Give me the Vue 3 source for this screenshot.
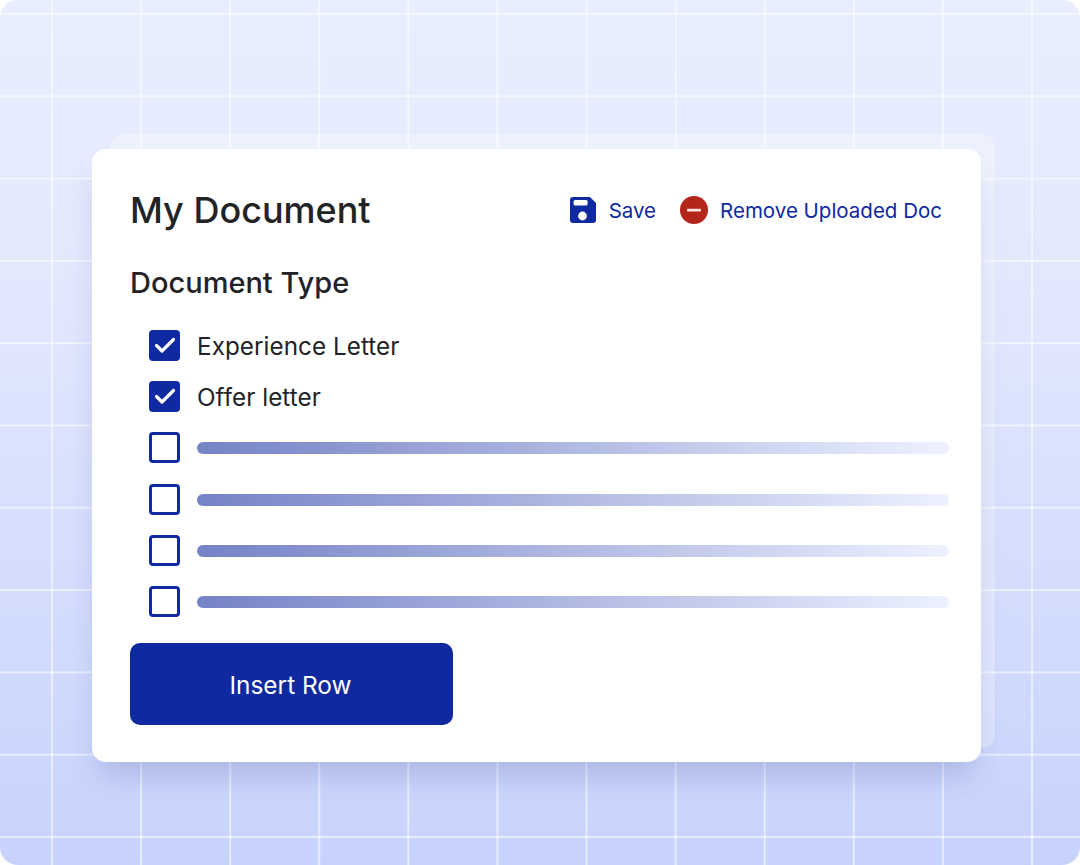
<script setup>
const checked = ['Experience Letter', 'Offer letter']
const empty = [1, 2, 3, 4]
</script>

<template>
  <div class="stage">
    <div class="back-card"></div>
    <section class="card">
      <header class="head">
        <h1 class="title">My Document</h1>
        <div class="actions">
          <a class="action save">
            <svg class="save-icon" viewBox="0 0 26 26" aria-hidden="true">
              <path fill="#0F29A0" fill-rule="evenodd" d="M3 0H20L26 6V23a3 3 0 0 1-3 3H3a3 3 0 0 1-3-3V3a3 3 0 0 1 3-3ZM5.200 3a1.600 1.600 0 0 0-1.600 1.600V7a1.600 1.600 0 0 0 1.600 1.600H16a1.600 1.600 0 0 0 1.600-1.600V4.600A1.600 1.600 0 0 0 16 3ZM12.500 14.600a4.400 4.400 0 1 0 0 8.800a4.400 4.400 0 0 0 0-8.800Z"/>
            </svg>
            <span>Save</span>
          </a>
          <a class="action remove">
            <svg class="remove-icon" viewBox="0 0 28 28" aria-hidden="true">
              <circle cx="14" cy="14" r="14" fill="#B5261A"/>
              <rect x="7" y="12.800" width="14" height="2.600" rx="0.600" fill="#F6E6E4"/>
            </svg>
            <span>Remove Uploaded Doc</span>
          </a>
        </div>
      </header>
      <h2 class="sub">Document Type</h2>
      <ul class="rows">
        <li v-for="label in checked" :key="label" class="row">
          <span class="box on">
            <svg viewBox="0 0 31 31" aria-hidden="true">
              <path d="M7.500 15.500l5.500 5.500L24.500 9.500" fill="none" stroke="#fff" stroke-width="3.200" stroke-linecap="round" stroke-linejoin="round"/>
            </svg>
          </span>
          <span class="label">{{ label }}</span>
        </li>
        <li v-for="n in empty" :key="n" class="row">
          <span class="box"></span>
          <span class="bar"></span>
        </li>
      </ul>
      <button class="insert" type="button">Insert Row</button>
    </section>
  </div>
</template>

<style>
html, body { margin: 0; background: #fff; }
</style>

<style scoped>
.stage {
  position: relative;
  box-sizing: border-box;
  width: 1080px;
  height: 865px;
  padding: 149px 0 0 92px;
  border-radius: 18px;
  overflow: hidden;
  font-family: Inter, "Liberation Sans", sans-serif;
  background-color: #d8e0fd;
  background-image:
    linear-gradient(90deg, rgba(255,255,255,.55) 2px, transparent 2px),
    linear-gradient(180deg, rgba(255,255,255,.55) 2px, transparent 2px),
    linear-gradient(180deg, #e9eefe 0%, #e3e9fd 30%, #c7d3fd 100%);
  background-size: 89.1px 100%, 100% 82.3px, 100% 100%;
  background-position: 51px 0, 0 13px, 0 0;
}
.back-card {
  position: absolute;
  left: 110px;
  top: 134px;
  width: 885px;
  height: 614px;
  border-radius: 14px;
  background: rgba(255,255,255,.32);
}
.card {
  position: relative;
  box-sizing: border-box;
  width: 889px;
  height: 613px;
  padding: 38px 38px 0 38px;
  border-radius: 14px;
  background: #fff;
  box-shadow: 0 20px 30px -8px rgba(50,60,130,.22);
}
.head {
  display: flex;
  align-items: center;
  justify-content: space-between;
  height: 46px;
}
.title {
  margin: 0;
  font-size: 36px;
  font-weight: 500;
  line-height: 46px;
  color: #222326;
}
.actions {
  display: flex;
  align-items: center;
  gap: 24px;
  margin-right: 1px;
}
.action {
  display: flex;
  align-items: center;
  font-size: 20.500px;
  font-weight: 400;
  color: #0F29A0;
}
.save-icon { width: 26px; height: 26px; margin-right: 13px; }
.remove-icon { width: 28px; height: 28px; margin-right: 12px; }
.sub {
  margin: 32px 0 0 0;
  font-size: 29px;
  font-weight: 500;
  line-height: 36px;
  color: #222326;
}
.rows {
  list-style: none;
  margin: 29px 0 0 19px;
  padding: 0;
  display: flex;
  flex-direction: column;
  gap: 20.200px;
}
.row {
  display: flex;
  align-items: center;
  gap: 17px;
  height: 31px;
}
.box {
  box-sizing: border-box;
  width: 31px;
  height: 31px;
  flex: none;
  border: 3.500px solid #0F29A0;
  border-radius: 4px;
  background: #fff;
}
.box.on {
  border: 0;
  background: #0F29A0;
}
.box svg { display: block; width: 31px; height: 31px; }
.label {
  padding-top: 2px;
  font-size: 24.250px;
  line-height: 31px;
  letter-spacing: 0.050px;
  color: #222326;
}
.bar {
  flex: none;
  width: 752px;
  height: 12px;
  margin-top: 1px;
  border-radius: 6px;
  background: linear-gradient(90deg, #7582C6 0%, #EDF1FF 100%);
}
.insert {
  display: block;
  width: 323px;
  height: 82px;
  margin: 26px 0 0 0;
  padding: 2px 8px 0 6px;
  border: 0;
  border-radius: 10px;
  background: #0F29A0;
  color: #fff;
  font-family: inherit;
  font-size: 24.400px;
  font-weight: 400;
}
</style>
